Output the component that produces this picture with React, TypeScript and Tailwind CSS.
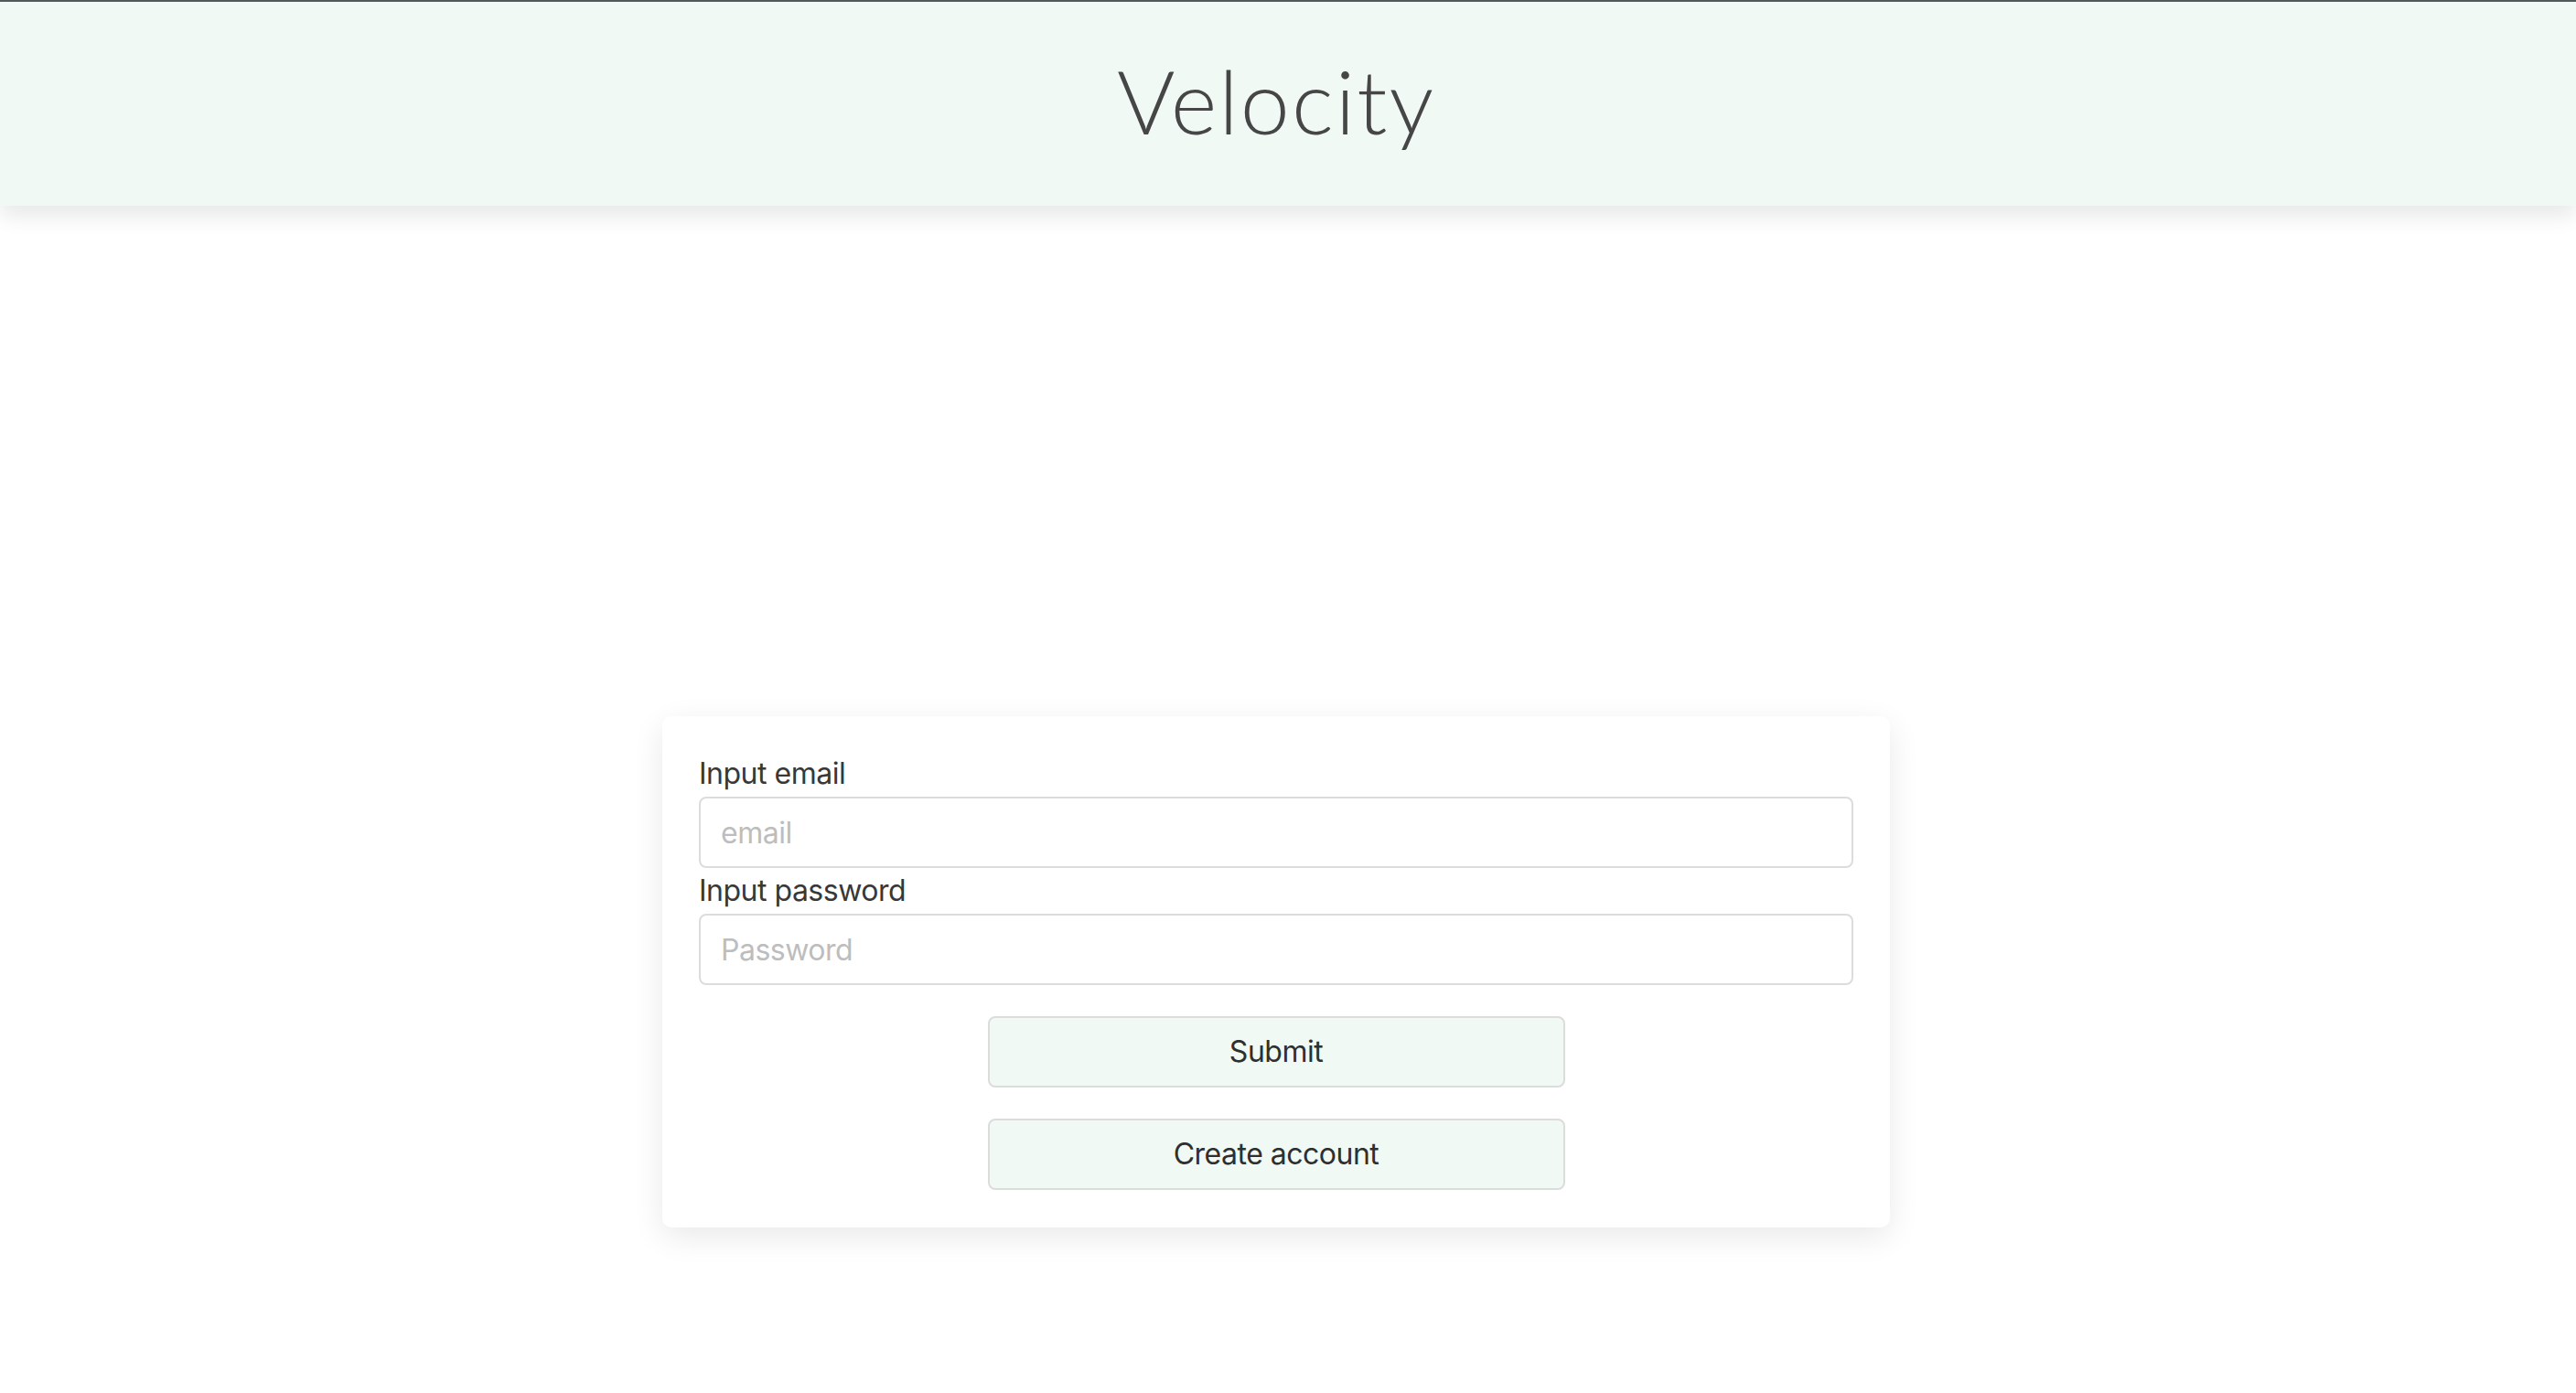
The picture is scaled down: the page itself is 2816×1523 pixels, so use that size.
export default function App() {
  return (
    <div className="min-h-screen bg-white font-['Inter',_'Noto_Sans',_sans-serif] text-[#333]">
      {/* Header */}
      <header className="relative z-10 flex h-[225px] items-center justify-center border-t-2 border-[#53585c] bg-[#f0f9f4] pr-[26px] pb-[8px] shadow-[0_12px_22px_rgba(0,0,0,0.09)]">
        <h1 className="font-['Lato',_sans-serif] text-[97px] font-light leading-none tracking-[2px] text-[#464646]">
          Velocity
        </h1>
      </header>

      {/* Login card */}
      <main className="flex justify-center pt-[558px] pr-[26px]">
        <form
          className="flex w-[1342px] flex-col rounded-[10px] bg-white px-10 pt-[38px] pb-[41px] shadow-[0_10px_34px_rgba(0,0,0,0.09)]"
          onSubmit={(e) => e.preventDefault()}
        >
          <label className="block text-[32px] leading-[50px] tracking-[-0.5px] text-[#383838]">Input email</label>
          <input
            type="email"
            placeholder="email"
            className="h-[78px] w-full rounded-[8px] border-2 border-[#dcdcdc] bg-white px-[22px] text-[32px] tracking-[-0.5px] outline-none placeholder:text-[#bdbdbd]"
          />
          <label className="block text-[32px] leading-[50px] tracking-[-0.5px] text-[#383838]">Input password</label>
          <input
            type="password"
            placeholder="Password"
            className="h-[78px] w-full rounded-[8px] border-2 border-[#dcdcdc] bg-white px-[22px] text-[32px] tracking-[-0.5px] outline-none placeholder:text-[#bdbdbd]"
          />

          <div className="mt-[34px] flex flex-col items-center gap-[34px]">
            <button
              type="submit"
              className="h-[78px] w-[631px] rounded-[8px] border-2 border-[#dcdcdc] bg-[#f0f9f4] text-[32px] tracking-[-0.5px] text-[#2f2f2f]"
            >
              Submit
            </button>
            <button
              type="button"
              className="h-[78px] w-[631px] rounded-[8px] border-2 border-[#dcdcdc] bg-[#f0f9f4] text-[32px] tracking-[-0.5px] text-[#2f2f2f]"
            >
              Create account
            </button>
          </div>
        </form>
      </main>
    </div>
  );
}
